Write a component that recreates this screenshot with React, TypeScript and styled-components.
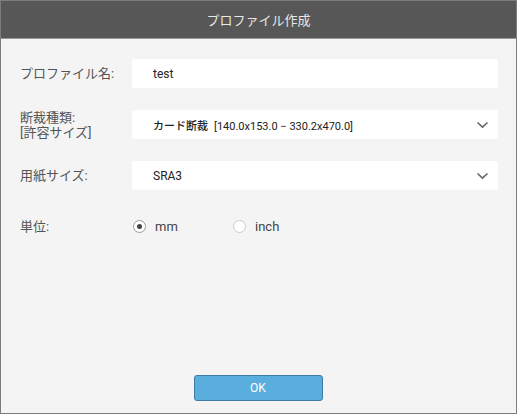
import React, { FC, useState } from 'react'
import styled, { createGlobalStyle } from 'styled-components'

const GlobalStyle = createGlobalStyle`
  html, body {
    margin: 0;
    padding: 0;
    background: #ffffff;
  }
  * {
    box-sizing: border-box;
  }
`

const Dialog = styled.div`
  width: 517px;
  height: 414px;
  display: flex;
  flex-direction: column;
  border: 1px solid #7c7c7c;
  background-color: #f4f4f4;
  font-family: Roboto, 'Noto Sans CJK JP', sans-serif;
`

const Header = styled.div`
  height: 38px;
  flex-shrink: 0;
  display: flex;
  align-items: center;
  justify-content: center;
  background-color: #575757;
  border-bottom: 1px solid #9a9a9a;
  color: #e8e8e8;
  font-size: 13px;
  padding-bottom: 1px;
`

const Form = styled.div`
  flex: 1;
  display: grid;
  grid-template-columns: 112px 1fr;
  grid-auto-rows: 29px;
  row-gap: 22px;
  align-content: start;
  padding: 20px 18px 0 19px;
`

const Label = styled.div`
  display: flex;
  flex-direction: column;
  justify-content: center;
  color: #555555;
  font-size: 13px;
  line-height: 15px;
`

const Field = styled.div<{ $select?: boolean; $small?: boolean }>`
  display: flex;
  align-items: center;
  justify-content: space-between;
  background-color: #ffffff;
  border-radius: 3px;
  padding: 0 9px 0 21px;
  color: #222222;
  font-size: ${(p) => (p.$small ? '11px' : '12px')};
  cursor: ${(p) => (p.$select ? 'pointer' : 'text')};
`

const CutName = styled.span`
  font-weight: 500;
  margin-right: 6px;
`

const Chevron = styled.svg`
  width: 13px;
  height: 8px;
  flex-shrink: 0;
`

const RadioGroup = styled.div`
  display: flex;
  align-items: center;
  padding-left: 1px;
`

const RadioOption = styled.label`
  width: 100px;
  display: flex;
  align-items: center;
  gap: 9px;
  color: #444444;
  font-size: 13px;
  cursor: pointer;
`

const RadioCircle = styled.span<{ $checked: boolean }>`
  width: 13px;
  height: 13px;
  border-radius: 50%;
  border: 1px solid ${(p) => (p.$checked ? '#9a9a9a' : '#cccccc')};
  background: #ffffff;
  display: flex;
  align-items: center;
  justify-content: center;

  &::after {
    content: '';
    width: 5px;
    height: 5px;
    border-radius: 50%;
    background: #444444;
    display: ${(p) => (p.$checked ? 'block' : 'none')};
  }
`

const Footer = styled.div`
  display: flex;
  justify-content: center;
  padding-bottom: 12px;
  padding-right: 1px;
`

const OkButton = styled.button`
  width: 129px;
  height: 26px;
  border: 1px solid #3d7ca6;
  border-radius: 3px;
  background-color: #5aaedd;
  color: #ffffff;
  font-family: Roboto, 'Noto Sans CJK JP', sans-serif;
  font-size: 12px;
  cursor: pointer;
`

const ChevronIcon: FC = () => (
  <Chevron viewBox="0 0 13 8">
    <path d="M1.5 1.5 L6.5 6.2 L11.5 1.5" fill="none" stroke="#666666" strokeWidth="1.6" />
  </Chevron>
)

export default function App(): JSX.Element {
  const [unit, setUnit] = useState<'mm' | 'inch'>('mm')

  return (
    <>
      <GlobalStyle />
      <Dialog>
        <Header>プロファイル作成</Header>
        <Form>
          <Label>プロファイル名:</Label>
          <Field>test</Field>

          <Label>
            <span>断裁種類:</span>
            <span>[許容サイズ]</span>
          </Label>
          <Field $select $small>
            <span>
              <CutName>カード断裁</CutName>
              [140.0x153.0 − 330.2x470.0]
            </span>
            <ChevronIcon />
          </Field>

          <Label>用紙サイズ:</Label>
          <Field $select>
            <span>SRA3</span>
            <ChevronIcon />
          </Field>

          <Label>単位:</Label>
          <RadioGroup>
            <RadioOption onClick={() => setUnit('mm')}>
              <RadioCircle $checked={unit === 'mm'} />
              mm
            </RadioOption>
            <RadioOption onClick={() => setUnit('inch')}>
              <RadioCircle $checked={unit === 'inch'} />
              inch
            </RadioOption>
          </RadioGroup>
        </Form>
        <Footer>
          <OkButton>OK</OkButton>
        </Footer>
      </Dialog>
    </>
  )
}
